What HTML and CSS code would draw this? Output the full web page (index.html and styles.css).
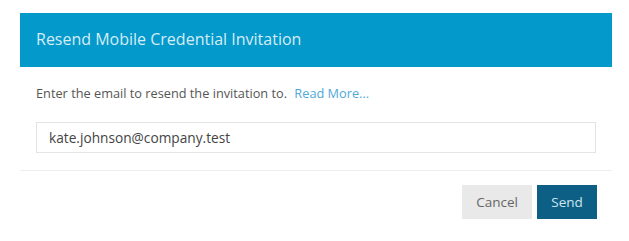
FILE: index.html
```html
<!DOCTYPE html>
<html lang="en">
<head>
    <meta charset="UTF-8">
    <meta name="viewport" content="width=device-width, initial-scale=1.0">
    <title>Resend Mobile Credential Invitation</title>
    <link rel="stylesheet" href="styles.css">
</head>
<body>
    <div class="modal">
        <div class="modal-header">Resend Mobile Credential Invitation</div>
        <div class="modal-body">
            <p class="hint">Enter the email to resend the invitation to. <a href="#" class="more">Read More...</a></p>
            <input class="email" type="text" value="kate.johnson@company.test">
        </div>
        <div class="modal-footer">
            <button class="btn btn-cancel">Cancel</button>
            <button class="btn btn-send">Send</button>
        </div>
    </div>
</body>
</html>
```

FILE: styles.css
```css
* {
    margin: 0;
    padding: 0;
    box-sizing: border-box;
}
body {
    background-color: #fff;
    font-family: "Open Sans", "Liberation Sans", sans-serif;
    color: #555;
}
.modal {
    width: 592px;
    margin: 13px 0 0 20px;
}
.modal-header {
    height: 54px;
    display: flex;
    align-items: center;
    padding: 0 0 2px 16px;
    background-color: #0399cb;
    color: #d6ecf6;
    font-size: 16px;
}
.modal-body {
    padding: 17px 16px 17px 16px;
    border-bottom: 1px solid #eeeeee;
}
.hint {
    font-size: 12.75px;
    line-height: 18px;
    color: #555;
}
.more {
    color: #4ea9d9;
    text-decoration: none;
    margin-left: 4px;
}
.email {
    display: block;
    width: 560px;
    height: 31px;
    margin-top: 20px;
    border: 1px solid #e4e4e4;
    padding-left: 12px;
    font-family: "Open Sans", "Liberation Sans", sans-serif;
    font-size: 13.7px;
    color: #444;
    outline: none;
}
.modal-footer {
    display: flex;
    justify-content: flex-end;
    gap: 5px;
    padding: 14px 15px 0 0;
}
.btn {
    height: 34px;
    border: none;
    font-family: "Open Sans", "Liberation Sans", sans-serif;
    font-size: 13.5px;
    cursor: pointer;
}
.btn-cancel {
    width: 70px;
    background-color: #e9e9e9;
    color: #666;
}
.btn-send {
    width: 60px;
    background-color: #0e5f85;
    color: #cfe6f0;
}
```
